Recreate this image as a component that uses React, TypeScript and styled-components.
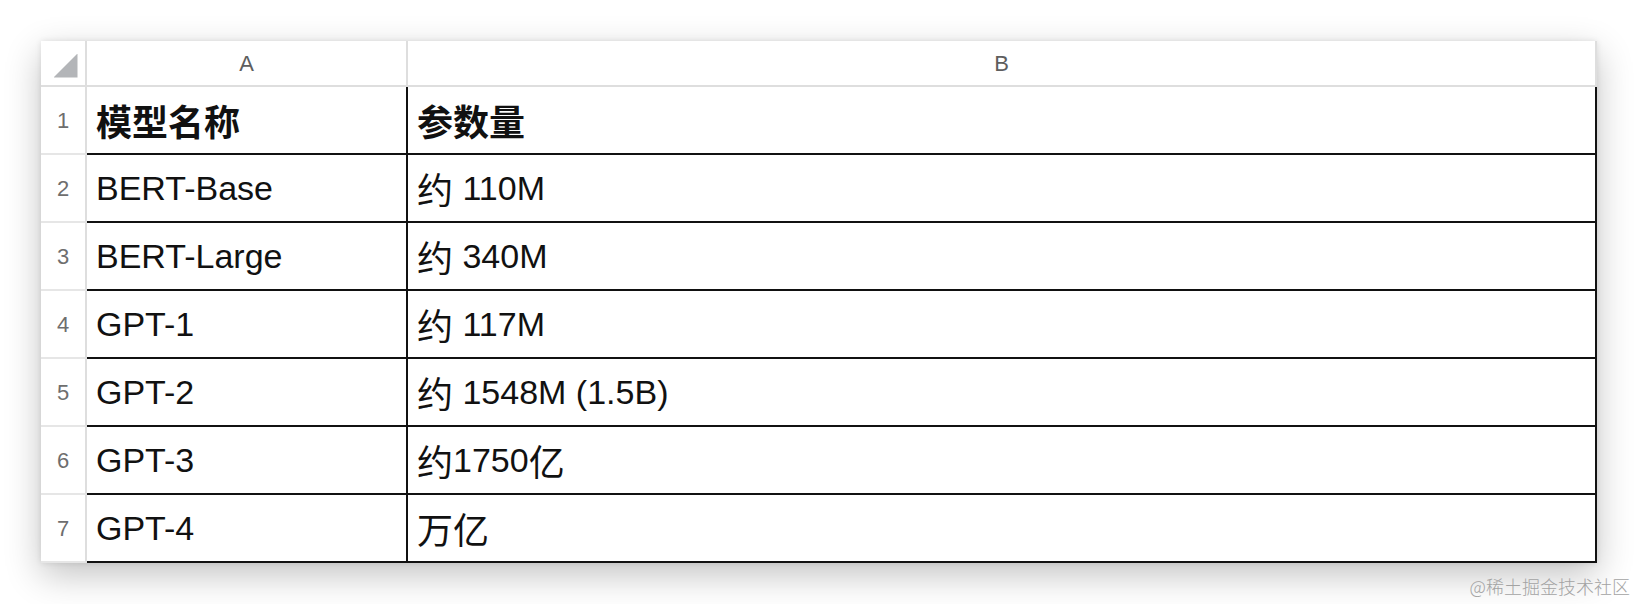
import styled, { createGlobalStyle } from "styled-components";

const GlobalStyle = createGlobalStyle`
  html, body {
    margin: 0;
    background: #ffffff;
  }
  * {
    box-sizing: border-box;
  }
`;

const rows: { name: string; params: string }[] = [
  { name: "BERT-Base", params: "约 110M" },
  { name: "BERT-Large", params: "约 340M" },
  { name: "GPT-1", params: "约 117M" },
  { name: "GPT-2", params: "约 1548M (1.5B)" },
  { name: "GPT-3", params: "约1750亿" },
  { name: "GPT-4", params: "万亿" },
];

// split text into runs so the Han glyphs can get their own size
const splitRuns = (text: string) => {
  const parts = text.match(/[\u4e00-\u9fff]+|[^\u4e00-\u9fff]+/g) || [];
  return parts.map((part, i) =>
    /[\u4e00-\u9fff]/.test(part) ? <Han key={i}>{part}</Han> : <span key={i}>{part}</span>
  );
};

export default function App() {
  return (
    <>
      <GlobalStyle />
      <Page>
        <Sheet>
          <Corner>
            <Triangle />
          </Corner>
          <ColHead>A</ColHead>
          <ColHead>B</ColHead>

          <RowHead>1</RowHead>
          <Cell $bold>{splitRuns("模型名称")}</Cell>
          <Cell $bold>{splitRuns("参数量")}</Cell>

          {rows.map((r, i) => (
            <Row key={r.name}>
              <RowHead>{i + 2}</RowHead>
              <Cell>{splitRuns(r.name)}</Cell>
              <Cell>{splitRuns(r.params)}</Cell>
            </Row>
          ))}
        </Sheet>
        <Footer>
          <Watermark>@稀土掘金技术社区</Watermark>
        </Footer>
      </Page>
    </>
  );
}

const Page = styled.div`
  width: 1638px;
  height: 604px;
  padding: 41px 0 0 41px;
  font-family: "Liberation Sans", "Noto Sans CJK SC", sans-serif;
`;

const Sheet = styled.div`
  width: 1556px;
  display: grid;
  grid-template-columns: 46px 321px 1fr;
  grid-template-rows: 46px repeat(7, 68px);
  background: #ffffff;
  box-shadow: 0 12px 34px rgba(0, 0, 0, 0.24), 0 0 6px rgba(0, 0, 0, 0.1);
`;

const Row = styled.div`
  display: contents;
`;

const Corner = styled.div`
  display: flex;
  align-items: center;
  justify-content: center;
  padding: 5px 0 0 5px;
  border-right: 2px solid #dedede;
  border-bottom: 2px solid #dedede;
`;

const Triangle = styled.div`
  width: 24px;
  height: 24px;
  background: #b3b5b8;
  clip-path: polygon(100% 0, 100% 100%, 0 100%);
`;

const ColHead = styled.div`
  display: flex;
  align-items: center;
  justify-content: center;
  padding-top: 2px;
  font-size: 22px;
  color: #5e5e5e;
  border-right: 2px solid #dedede;
  border-bottom: 2px solid #dedede;
`;

const RowHead = styled.div`
  display: flex;
  align-items: center;
  justify-content: center;
  padding-top: 2px;
  font-size: 22px;
  color: #6e6e6e;
  border-right: 2px solid #dedede;
  border-bottom: 2px solid #e6e6e6;
`;

const Cell = styled.div<{ $bold?: boolean }>`
  display: flex;
  align-items: center;
  padding-left: 9px;
  font-size: 34px;
  font-weight: ${(p) => (p.$bold ? 700 : 400)};
  color: #111111;
  white-space: pre;
  border-right: 2px solid #111111;
  border-bottom: 2px solid #111111;
`;

const Han = styled.span`
  font-family: "Noto Sans CJK SC", sans-serif;
  font-size: 36px;
`;

const Footer = styled.div`
  display: flex;
  justify-content: flex-end;
  padding: 10px 8px 0 0;
`;

const Watermark = styled.span`
  font-family: "Noto Sans CJK SC", serif;
  font-size: 18px;
  font-weight: 300;
  color: #a3a3a3;
`;
